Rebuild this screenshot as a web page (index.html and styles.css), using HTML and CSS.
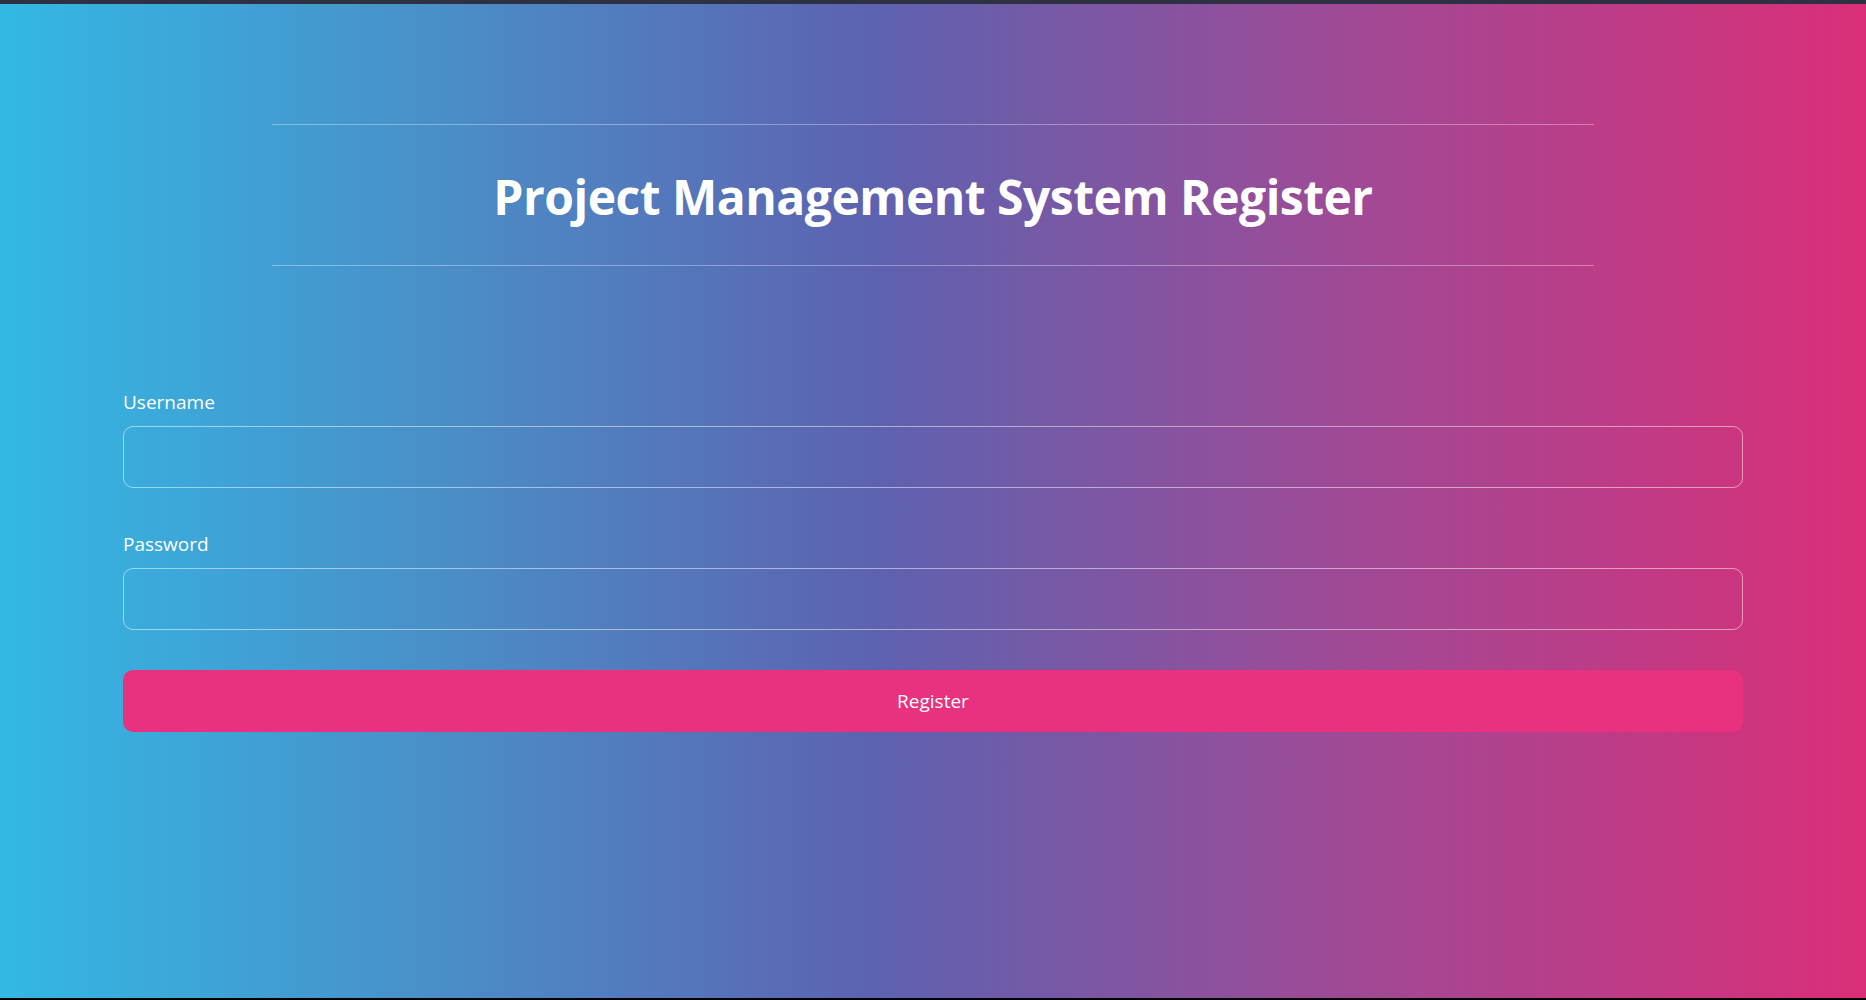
FILE: index.html
```html
<!DOCTYPE html>
<html lang="en">
<head>
<meta charset="utf-8">
<title>Register</title>
<link rel="stylesheet" href="styles.css">
</head>
<body>
<div class="topbar"></div>
<main class="page">
  <header class="header">
    <hr class="rule">
    <h1 class="title">Project Management System Register</h1>
    <hr class="rule">
  </header>
  <form class="form">
    <div class="field">
      <label class="label" for="username">Username</label>
      <input class="input" id="username" type="text">
    </div>
    <div class="field">
      <label class="label" for="password">Password</label>
      <input class="input" id="password" type="password">
    </div>
    <button class="button" type="button">Register</button>
  </form>
</main>
<div class="bottombar"></div>
</body>
</html>
```

FILE: styles.css
```css
* { box-sizing: border-box; }
html, body { margin: 0; padding: 0; }
body {
  height: 1000px;
  display: flex;
  flex-direction: column;
  font-family: "Open Sans", "Noto Sans", sans-serif;
  color: #fff;
  background: linear-gradient(to right, #33b8e4 0%, #4b8cc6 25%, #5d62b0 47%, #9a4c98 70%, #db2e78 100%);
  overflow: hidden;
}
.topbar { height: 4px; background: #2e3142; flex: none; }
.bottombar { height: 2px; background: #000; flex: none; }
.page { flex: 1; }
.header {
  width: 1322px;
  margin: 120px auto 0;
}
.rule {
  margin: 0;
  border: 0;
  border-top: 1px solid rgba(255,255,255,0.35);
  height: 0;
}
.title {
  margin: 0;
  height: 140px;
  display: flex;
  align-items: center;
  justify-content: center;
  font-size: 48px;
  font-weight: 700;
  letter-spacing: -0.5px;
  padding-top: 2px;
}
.form {
  width: 1620px;
  margin: 124px auto 0;
  display: flex;
  flex-direction: column;
}
.field {
  display: flex;
  flex-direction: column;
  gap: 12px;
  margin-bottom: 44px;
}
.field:nth-child(2) { margin-bottom: 40px; }
.label {
  font-size: 19px;
  line-height: 24px;
}
.input {
  height: 62px;
  border: 1px solid rgba(255,255,255,0.5);
  border-radius: 10px;
  background: transparent;
  color: #fff;
  font: inherit;
  padding: 0 16px;
  outline: none;
}
.button {
  height: 62px;
  border: 0;
  border-radius: 10px;
  background: #e8317f;
  color: #fff;
  font-family: inherit;
  font-size: 19px;
  cursor: pointer;
}
```
